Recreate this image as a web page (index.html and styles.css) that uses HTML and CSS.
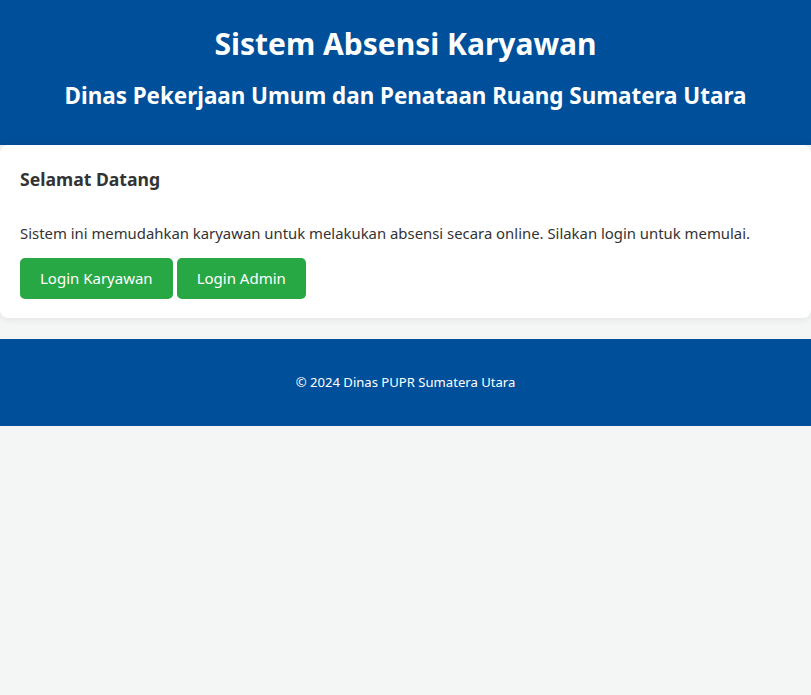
FILE: index.html
```html
<!DOCTYPE html>
<html lang="id">
<head>
<meta charset="utf-8">
<title>Sistem Absensi Karyawan</title>
<link rel="stylesheet" href="styles.css">
</head>
<body>
<header class="site-header">
  <h1 class="title">Sistem Absensi Karyawan</h1>
  <h2 class="subtitle">Dinas Pekerjaan Umum dan Penataan Ruang Sumatera Utara</h2>
</header>
<main class="card">
  <h3 class="card-title">Selamat Datang</h3>
  <p class="card-text">Sistem ini memudahkan karyawan untuk melakukan absensi secara online. Silakan login untuk memulai.</p>
  <div class="actions">
    <a class="btn" href="#">Login Karyawan</a>
    <a class="btn" href="#">Login Admin</a>
  </div>
</main>
<footer class="site-footer">
  <p class="footer-text">© 2024 Dinas PUPR Sumatera Utara</p>
</footer>
</body>
</html>
```
FILE: styles.css
```css
html, body {
  margin: 0;
  padding: 0;
}
body {
  background: #f4f5f5;
  font-family: "Noto Sans", "Open Sans", sans-serif;
  color: #333;
}
.site-header {
  box-sizing: border-box;
  background: #004f9a;
  color: #fff;
  text-align: center;
  padding: 24px 20px 0;
  height: 145px;
}
.title {
  margin: 0;
  font-size: 30px;
  line-height: 40px;
  font-weight: 700;
}
.subtitle {
  margin: 17px 0 0;
  font-size: 22.4px;
  line-height: 30px;
  font-weight: 700;
}
.card {
  display: block;
  background: #fff;
  border-radius: 8px;
  box-shadow: 0 0 10px rgba(0, 0, 0, 0.1);
  padding: 20px 20px 19px;
  margin-bottom: 21px;
}
.card-title {
  margin: 0;
  font-size: 17.6px;
  line-height: 28px;
  font-weight: 700;
}
.card-text {
  margin: 28px 0 13px;
  font-size: 14.88px;
  line-height: 24px;
}
.actions {
  display: flex;
  gap: 4px;
}
.btn {
  display: inline-block;
  background: #28a745;
  color: #fff;
  text-decoration: none;
  font-size: 15px;
  line-height: 21px;
  padding: 10px 20px;
  border-radius: 5px;
}
.site-footer {
  background: #004f9a;
  color: #fff;
  text-align: center;
  padding: 20px;
}
.footer-text {
  margin: 14px 0;
  font-size: 13.1px;
  line-height: 19px;
}
```
